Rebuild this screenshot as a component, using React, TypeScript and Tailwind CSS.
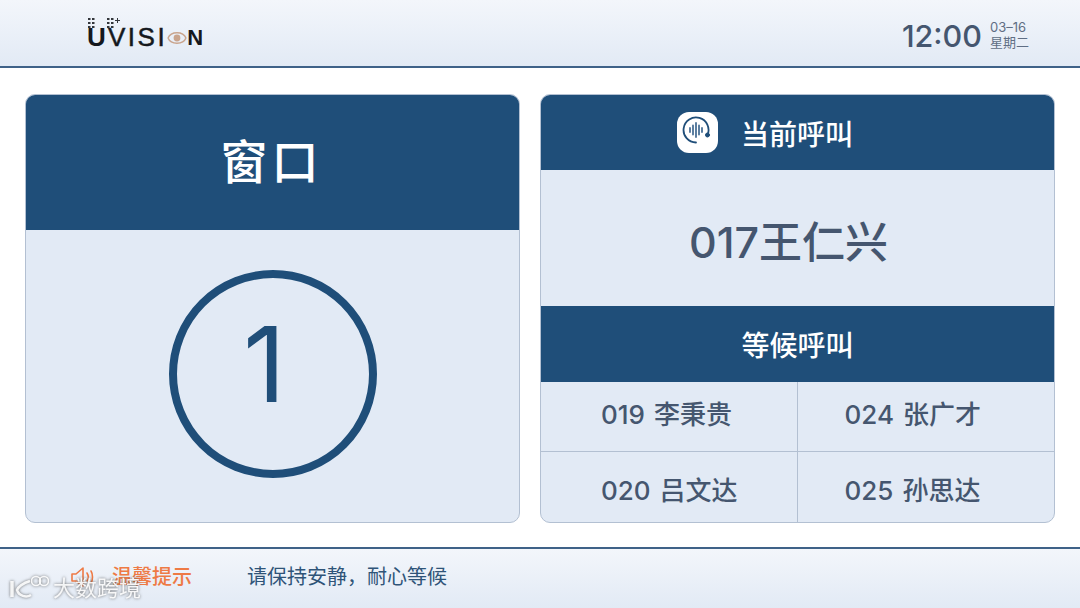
const cjk = "font-['Inter','Noto_Sans_CJK_SC',sans-serif]";

const Waiting = ({ no, name, cell }: { no: string; name: string; cell: string }) => (
  <div className={`flex items-center justify-start text-[26px] font-medium text-[#45566f] ${cell}`}>
    <span>{no}</span>
    <span className="ml-[9px]">{name}</span>
  </div>
);

export default function App() {
  return (
    <div className={`flex h-[608px] w-[1080px] flex-col overflow-hidden bg-white ${cjk}`}>
      <header className="flex h-[68px] shrink-0 items-center justify-between border-b-2 border-[#3f6288] bg-gradient-to-b from-[#f3f6fb] to-[#e2eaf5] pl-[87px] pr-[51px]">
        <div className="relative flex h-[46px] w-[118px] items-end pb-[9px] font-['Liberation_Sans',sans-serif] leading-none text-[#15181d]">
          <svg className="absolute left-0 top-[8px]" width="34" height="12" viewBox="0 0 34 12">
            <g fill="#33363b">
              <rect x="1" y="0" width="2.500" height="2" /><rect x="5" y="0" width="2.500" height="2" />
              <rect x="1" y="4" width="2.500" height="2" /><rect x="5" y="4" width="2.500" height="2" />
              <rect x="1" y="8" width="2.500" height="2" /><rect x="5" y="8" width="2.500" height="2" />
              <rect x="20" y="0" width="2.500" height="2" /><rect x="24" y="0" width="2.500" height="2" />
              <rect x="20" y="4" width="2.500" height="2" /><rect x="24" y="4" width="2.500" height="2" />
              <rect x="20" y="8" width="2.500" height="2" /><rect x="24" y="8" width="2.500" height="2" />
              <path d="M28 2h2V0h1v2h2v1h-2v2h-1V3h-2z" />
            </g>
          </svg>
          <span className="w-[21px] text-[26px] font-bold leading-[19px]">U</span>
          <span className="text-[26px] leading-[19px] tracking-[2.500px] [-webkit-text-stroke:0.5px_#15181d]">VISI</span>
          <svg className="shrink-0" width="20" height="18" viewBox="0 0 20 18" fill="none">
            <path d="M1 9C4 2 16 2 19 9M1 9c3 7 15 7 18 0" stroke="#c9a48d" strokeWidth="1.500" />
            <circle cx="10" cy="9" r="3.400" fill="#c9a48d" />
          </svg>
          <span className="text-[22px] font-bold leading-[18px]">N</span>
        </div>
        <div className="flex items-center pt-[6px] text-[#45566f]">
          <span className="text-[30.500px] font-medium leading-none">12:00</span>
          <div className="ml-[8px] mt-[-2px] flex flex-col text-[13px] leading-[15px] text-[#5f6e84]">
            <span>03–16</span>
            <span>星期二</span>
          </div>
        </div>
      </header>

      <main className="flex flex-1 gap-[20px] pb-[24px] pl-[25px] pr-[25px] pt-[26px]">
        <section className="flex w-[495px] flex-col overflow-hidden rounded-[10px] border border-[#b3c0d2] bg-[#e2eaf5]">
          <div className="flex h-[135px] items-center justify-center bg-[#1f4e79] pr-[2px] text-[47px] font-medium tracking-[4px] text-white">
            窗口
          </div>
          <div className="flex flex-1 items-center justify-center pb-[4px]">
            <div className="flex h-[208px] w-[208px] items-center justify-center rounded-full border-[8px] border-[#1f4e79] pb-[20px] pr-[16px] text-[104px] font-normal leading-none text-[#1f4e79]">
              1
            </div>
          </div>
        </section>

        <section className="flex flex-1 flex-col overflow-hidden rounded-[10px] border border-[#b3c0d2] bg-[#e2eaf5]">
          <div className="flex h-[75px] items-center justify-center bg-[#1f4e79] pt-[4px] text-[28px] font-medium text-white">
            <div className="ml-[-65px] mr-[23px] mt-[-4px] flex h-[41px] w-[41px] items-center justify-center rounded-[12px] bg-white pb-[3px]">
              <svg width="30" height="30" viewBox="0 0 30 30" fill="none" stroke="#1f4e79" strokeLinecap="round">
                <path d="M25.500 19A12.500 12.500 0 1 0 14 26.500" strokeWidth="1.800" />
                <path d="M8 12v4M11 9.500v9M14 7v14M17 9.500v9M20 12v4" strokeWidth="1.800" stroke="#4a7096" />
                <circle cx="25.500" cy="19" r="2" fill="#1f4e79" />
              </svg>
            </div>
            当前呼叫
          </div>
          <div className="flex h-[136px] items-center justify-center pr-[18px] pt-[8px] text-[43px] font-medium text-[#45566f]">
            017王仁兴
          </div>
          <div className="flex h-[76px] items-center justify-center bg-[#1f4e79] pt-[3px] text-[28px] font-medium text-white">
            等候呼叫
          </div>
          <div className="grid flex-1 grid-cols-2 grid-rows-2">
            <Waiting no="019" name="李秉贵" cell="border-r border-b border-[#b3c0d2] pl-[60px] pb-[4px]" />
            <Waiting no="024" name="张广才" cell="border-b border-[#b3c0d2] pl-[47px] pb-[4px]" />
            <Waiting no="020" name="吕文达" cell="border-r border-[#b3c0d2] pl-[60px] pt-[6px]" />
            <Waiting no="025" name="孙思达" cell="pl-[47px] pt-[6px]" />
          </div>
        </section>
      </main>

      <footer className="relative flex h-[61px] shrink-0 items-center border-t-2 border-[#3f6288] bg-gradient-to-b from-[#f3f6fb] to-[#e2eaf5] pb-[3px] pl-[70px]">
        <svg width="26" height="24" viewBox="0 0 26 24" fill="none" stroke="#ee7a45" strokeWidth="1.600" strokeLinejoin="round" strokeLinecap="round">
          <path d="M2 9h4l7-6v18l-7-5H2z" />
          <path d="M17 8c1.500 2.500 1.500 6 0 8M21 6c2 3 2 9 0 12" />
        </svg>
        <span className="ml-[16px] text-[20px] font-medium text-[#ee7a45]">温馨提示</span>
        <span className="ml-[55px] text-[20px] text-[#2f5478]">请保持安静，耐心等候</span>
        <div className="absolute left-[9px] top-[26px] flex items-center text-white/90 drop-shadow-[0_0_1.500px_rgba(70,70,70,0.85)]">
          <svg width="40" height="26" viewBox="0 0 40 26" fill="none" stroke="currentColor" strokeWidth="2.500">
            <path d="M3 6v16" strokeWidth="3.500" />
            <path d="M21 6C14 8 9 12 8 15c2 6 9 8 14 5" />
            <circle cx="27" cy="6" r="4.500" strokeWidth="1.600" />
            <circle cx="35" cy="6" r="4.500" strokeWidth="1.600" />
          </svg>
          <span className="ml-[4px] text-[22px] font-normal leading-none">大数跨境</span>
        </div>
      </footer>
    </div>
  );
}
